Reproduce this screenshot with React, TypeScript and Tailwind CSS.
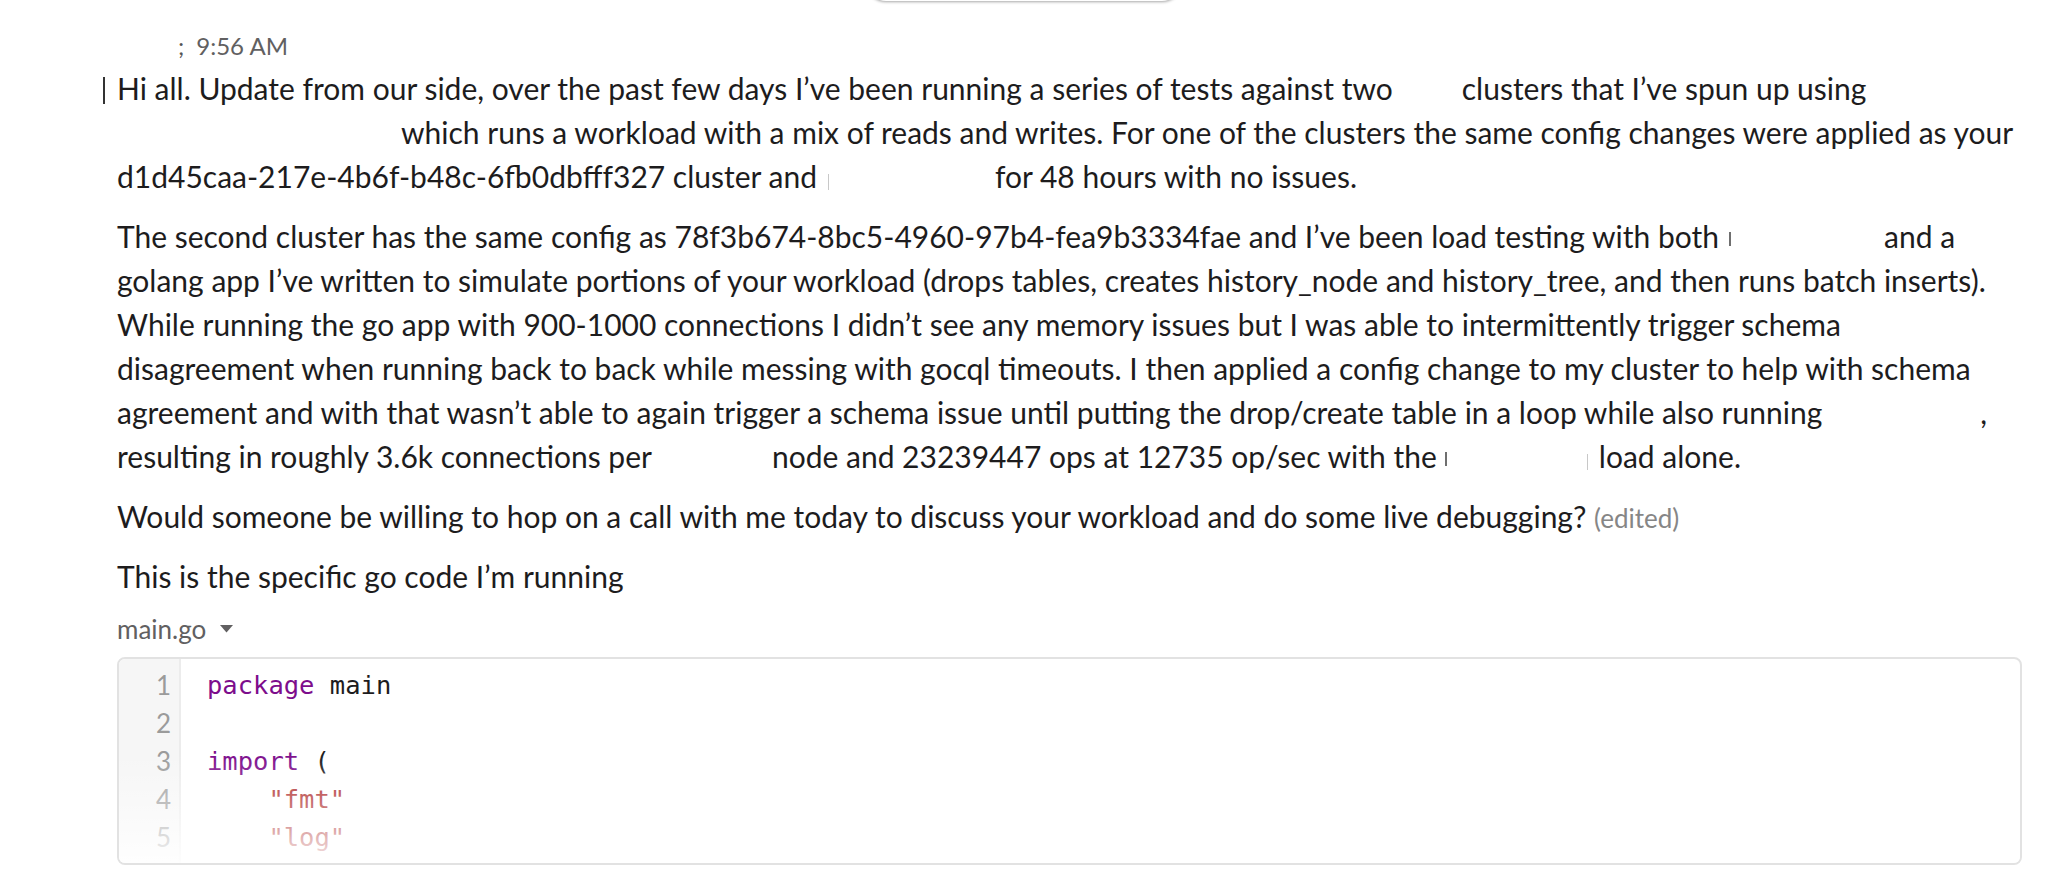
import React from "react";

const Tick = ({ light }: { light?: boolean }) => (
  <span
    className={
      light
        ? "inline-block w-[1px] h-[16px] bg-[#c8c8c8] align-[-2px]"
        : "inline-block w-[2px] h-[14px] bg-[#6f6f6f] align-[2px]"
    }
  />
);

const Line = ({ children }: { children: React.ReactNode }) => (
  <div className="whitespace-nowrap h-[44px] leading-[44px]">{children}</div>
);

const CodeLine = ({ n, children }: { n: number; children?: React.ReactNode }) => (
  <div className="flex h-[38px] leading-[38px]">
    <div className="w-[62px] shrink-0 pr-[10px] text-right font-['Lato',sans-serif] text-[26px] text-[#9b9b9b]">
      {n}
    </div>
    <div className="pl-[26px] whitespace-pre">{children}</div>
  </div>
);

export default function App() {
  return (
    <div className="relative h-[878px] w-full overflow-hidden bg-white font-['Lato',sans-serif] text-[#1d1c1d]">
      {/* edge of a floating pill above the view */}
      <div className="absolute left-[866px] top-[-40px] h-[41px] w-[316px] rounded-b-[20px] bg-white shadow-[0_1px_3px_rgba(0,0,0,0.35)]" />

      <div className="pl-[117px] pr-[24px] pt-[30px]">
        <div className="flex h-[32px] items-center text-[24px] leading-[32px]">
          <span className="ml-[61px] text-[#555]">;</span>
          <span className="ml-[12px] text-[#616061]">9:56 AM</span>
        </div>

        <div className="mt-[4px] text-[30px]">
          <Line>
            <span className="-ml-[14px] mr-[12px] inline-block h-[27px] w-[2px] bg-[#333] align-[-4px]" />
            Hi all. Update from our side, over the past few days I’ve been running a series of tests against two
            <span className="inline-block w-[69px]" />
            clusters that I’ve spun up using
          </Line>
          <Line>
            <span className="inline-block w-[284px]" />
            which runs a workload with a mix of reads and writes. For one of the clusters the same config changes were applied as your
          </Line>
          <Line>
            d1d45caa-217e-4b6f-b48c-6fb0dbfff327 cluster and
            <span className="inline-block w-[11px]" />
            <Tick light />
            <span className="inline-block w-[166px]" />
            for 48 hours with no issues.
          </Line>
        </div>

        <div className="mt-[16px] text-[30px]">
          <Line>
            The second cluster has the same config as 78f3b674-8bc5-4960-97b4-fea9b3334fae and I’ve been load testing with both
            <span className="inline-block w-[10px]" />
            <Tick />
            <span className="inline-block w-[153px]" />
            and a
          </Line>
          <Line>
            golang app I’ve written to simulate portions of your workload (drops tables, creates history_node and history_tree, and then runs batch inserts).
          </Line>
          <Line>
            While running the go app with 900-1000 connections I didn’t see any memory issues but I was able to intermittently trigger schema
          </Line>
          <Line>
            disagreement when running back to back while messing with gocql timeouts. I then applied a config change to my cluster to help with schema
          </Line>
          <Line>
            agreement and with that wasn’t able to again trigger a schema issue until putting the drop/create table in a loop while also running
            <span className="inline-block w-[158px]" />,
          </Line>
          <Line>
            resulting in roughly 3.6k connections per
            <span className="inline-block w-[120px]" />
            node and 23239447 ops at 12735 op/sec with the
            <span className="inline-block w-[8px]" />
            <Tick />
            <span className="inline-block w-[140px]" />
            <Tick light />
            <span className="inline-block w-[11px]" />
            load alone.
          </Line>
        </div>

        <div className="mt-[16px] text-[30px]">
          <Line>
            Would someone be willing to hop on a call with me today to discuss your workload and do some live debugging?{" "}
            <span className="text-[26px] text-[#868686]">(edited)</span>
          </Line>
        </div>

        <div className="mt-[16px] text-[30px]">
          <Line>This is the specific go code I’m running</Line>
        </div>

        <div className="mt-[12px] flex h-[38px] items-center text-[26px] leading-[38px] text-[#616061]">
          <span>main.go</span>
          <svg className="ml-[14px]" width="13" height="8" viewBox="0 0 13 8">
            <path d="M0 0 L13 0 L6.5 7.5 Z" fill="#616061" />
          </svg>
        </div>

        <div className="relative mt-[9px] h-[208px] overflow-hidden rounded-[8px] border-2 border-[#e2e2e2] bg-white">
          <div className="absolute inset-y-0 left-0 w-[62px] border-r-2 border-[#ececec] bg-[#f6f6f6]" />
          <div className="relative pt-[7px] font-['DejaVu_Sans_Mono',monospace] text-[25.5px] text-[#1d1c1d]">
            <CodeLine n={1}>
              <span className="text-[#7d0d8c]">package</span> main
            </CodeLine>
            <CodeLine n={2} />
            <CodeLine n={3}>
              <span className="text-[#7d0d8c]">import</span> (
            </CodeLine>
            <CodeLine n={4}>
              <span className="text-[#aa2222]">{'    "fmt"'}</span>
            </CodeLine>
            <CodeLine n={5}>
              <span className="text-[#aa2222]">{'    "log"'}</span>
            </CodeLine>
          </div>
          <div className="absolute inset-x-0 bottom-0 h-[110px] bg-gradient-to-b from-white/0 via-white/40 to-white/90" />
        </div>
      </div>
    </div>
  );
}
